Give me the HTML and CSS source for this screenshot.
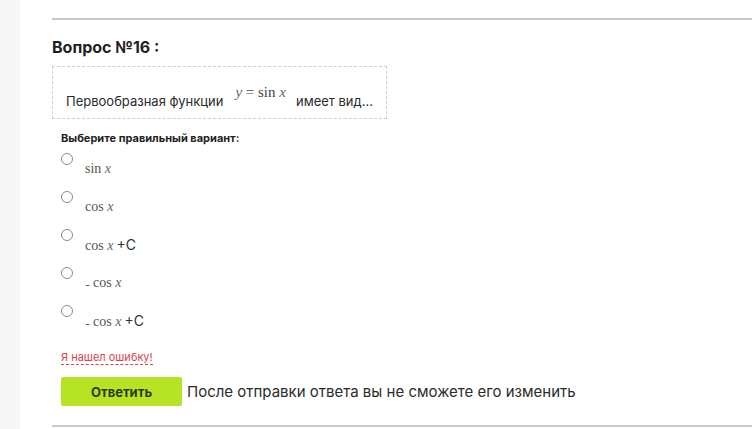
FILE: index.html
```html
<!DOCTYPE html>
<html lang="ru">
<head>
<meta charset="utf-8">
<link rel="stylesheet" href="styles.css">
</head>
<body>
<div class="page">
  <aside class="strip"></aside>
  <main class="main">
    <div class="rule"></div>
    <h2 class="title">Вопрос №16 :</h2>
    <div class="question">
      <span class="qtext">Первообразная функции</span>
      <span class="math qmath"><i>y</i> = sin <i>x</i></span>
      <span class="qtext">имеет вид...</span>
    </div>
    <div class="body">
      <div class="prompt">Выберите правильный вариант:</div>
      <ul class="options">
        <li class="option"><span class="radio"></span><span class="opt"><span class="math">sin <i>x</i></span></span></li>
        <li class="option"><span class="radio"></span><span class="opt"><span class="math">cos <i>x</i></span></span></li>
        <li class="option"><span class="radio"></span><span class="opt"><span class="math">cos <i>x</i></span><span class="plus">+C</span></span></li>
        <li class="option"><span class="radio"></span><span class="opt"><span class="minus">-</span><span class="math">cos <i>x</i></span></span></li>
        <li class="option"><span class="radio"></span><span class="opt"><span class="minus">-</span><span class="math">cos <i>x</i></span><span class="plus">+C</span></span></li>
      </ul>
      <a class="report">Я нашел ошибку!</a>
      <div class="actions">
        <button class="submit">Ответить</button>
        <span class="note">После отправки ответа вы не сможете его изменить</span>
      </div>
    </div>
    <div class="rule bottom"></div>
  </main>
</div>
</body>
</html>
```
FILE: styles.css
```css
html, body {
  margin: 0;
  padding: 0;
  background: #fff;
}
body {
  font-family: Inter, "Noto Sans", "Liberation Sans", sans-serif;
  color: #222;
}
.page {
  display: flex;
  height: 429px;
  overflow: hidden;
}
.strip {
  width: 20px;
  flex: none;
  background: #f7f7f8;
}
.main {
  flex: 1;
  padding-left: 32px;
  display: flex;
  flex-direction: column;
}
.rule {
  height: 2px;
  background: #c9c9c9;
  margin-top: 18px;
}
.rule.bottom {
  margin-top: 19px;
}
.title {
  margin: 17px 0 0;
  font-size: 16px;
  line-height: 20px;
  font-weight: 700;
  color: #1f1f1f;
}
.question {
  margin-top: 9px;
  width: 320px;
  height: 51px;
  box-sizing: content-box;
  border: 1px dashed #cfcfcf;
  padding-left: 13px;
  display: flex;
  align-items: center;
}
.qtext {
  font-size: 13px;
  color: #2b2b2b;
  margin-top: 16px;
}
.math {
  font-family: "Liberation Serif", "DejaVu Serif", serif;
  color: #555;
  font-size: 14px;
}
.math i {
  font-style: italic;
  color: #666;
}
.qmath {
  font-size: 15px;
  margin: 0 10px 0 12px;
  color: #444;
}
.body {
  padding-left: 9px;
  display: flex;
  flex-direction: column;
}
.prompt {
  margin-top: 12px;
  font-size: 11px;
  line-height: 14px;
  font-weight: 700;
  color: #222;
}
.options {
  list-style: none;
  margin: 0;
  padding: 0;
}
.option {
  height: 38px;
  display: flex;
}
.radio {
  width: 10px;
  height: 10px;
  border: 1px solid #8a8a8a;
  border-radius: 50%;
  background: #fff;
  margin-top: 8px;
  flex: none;
}
.opt {
  margin-left: 12px;
  margin-top: 16px;
  line-height: 16px;
  display: flex;
  align-items: baseline;
}
.plus {
  font-size: 14px;
  color: #333;
  margin-left: 3px;
}
.minus {
  font-size: 11px;
  color: #555;
  margin-right: 3px;
  position: relative;
  top: 2px;
}
.report {
  align-self: flex-start;
  margin-top: 16px;
  font-size: 11px;
  line-height: 13px;
  color: #d9434a;
  border-bottom: 1px dashed #d9434a;
}
.actions {
  margin-top: 12px;
  display: flex;
  align-items: center;
}
.submit {
  width: 121px;
  height: 29px;
  border: none;
  border-radius: 2px;
  background: #b6e424;
  color: #2c3a1c;
  font-family: Inter, "Noto Sans", "Liberation Sans", sans-serif;
  font-size: 13px;
  font-weight: 700;
  padding: 0;
}
.note {
  margin-left: 5px;
  font-size: 15px;
  color: #2b2b2b;
}
```
